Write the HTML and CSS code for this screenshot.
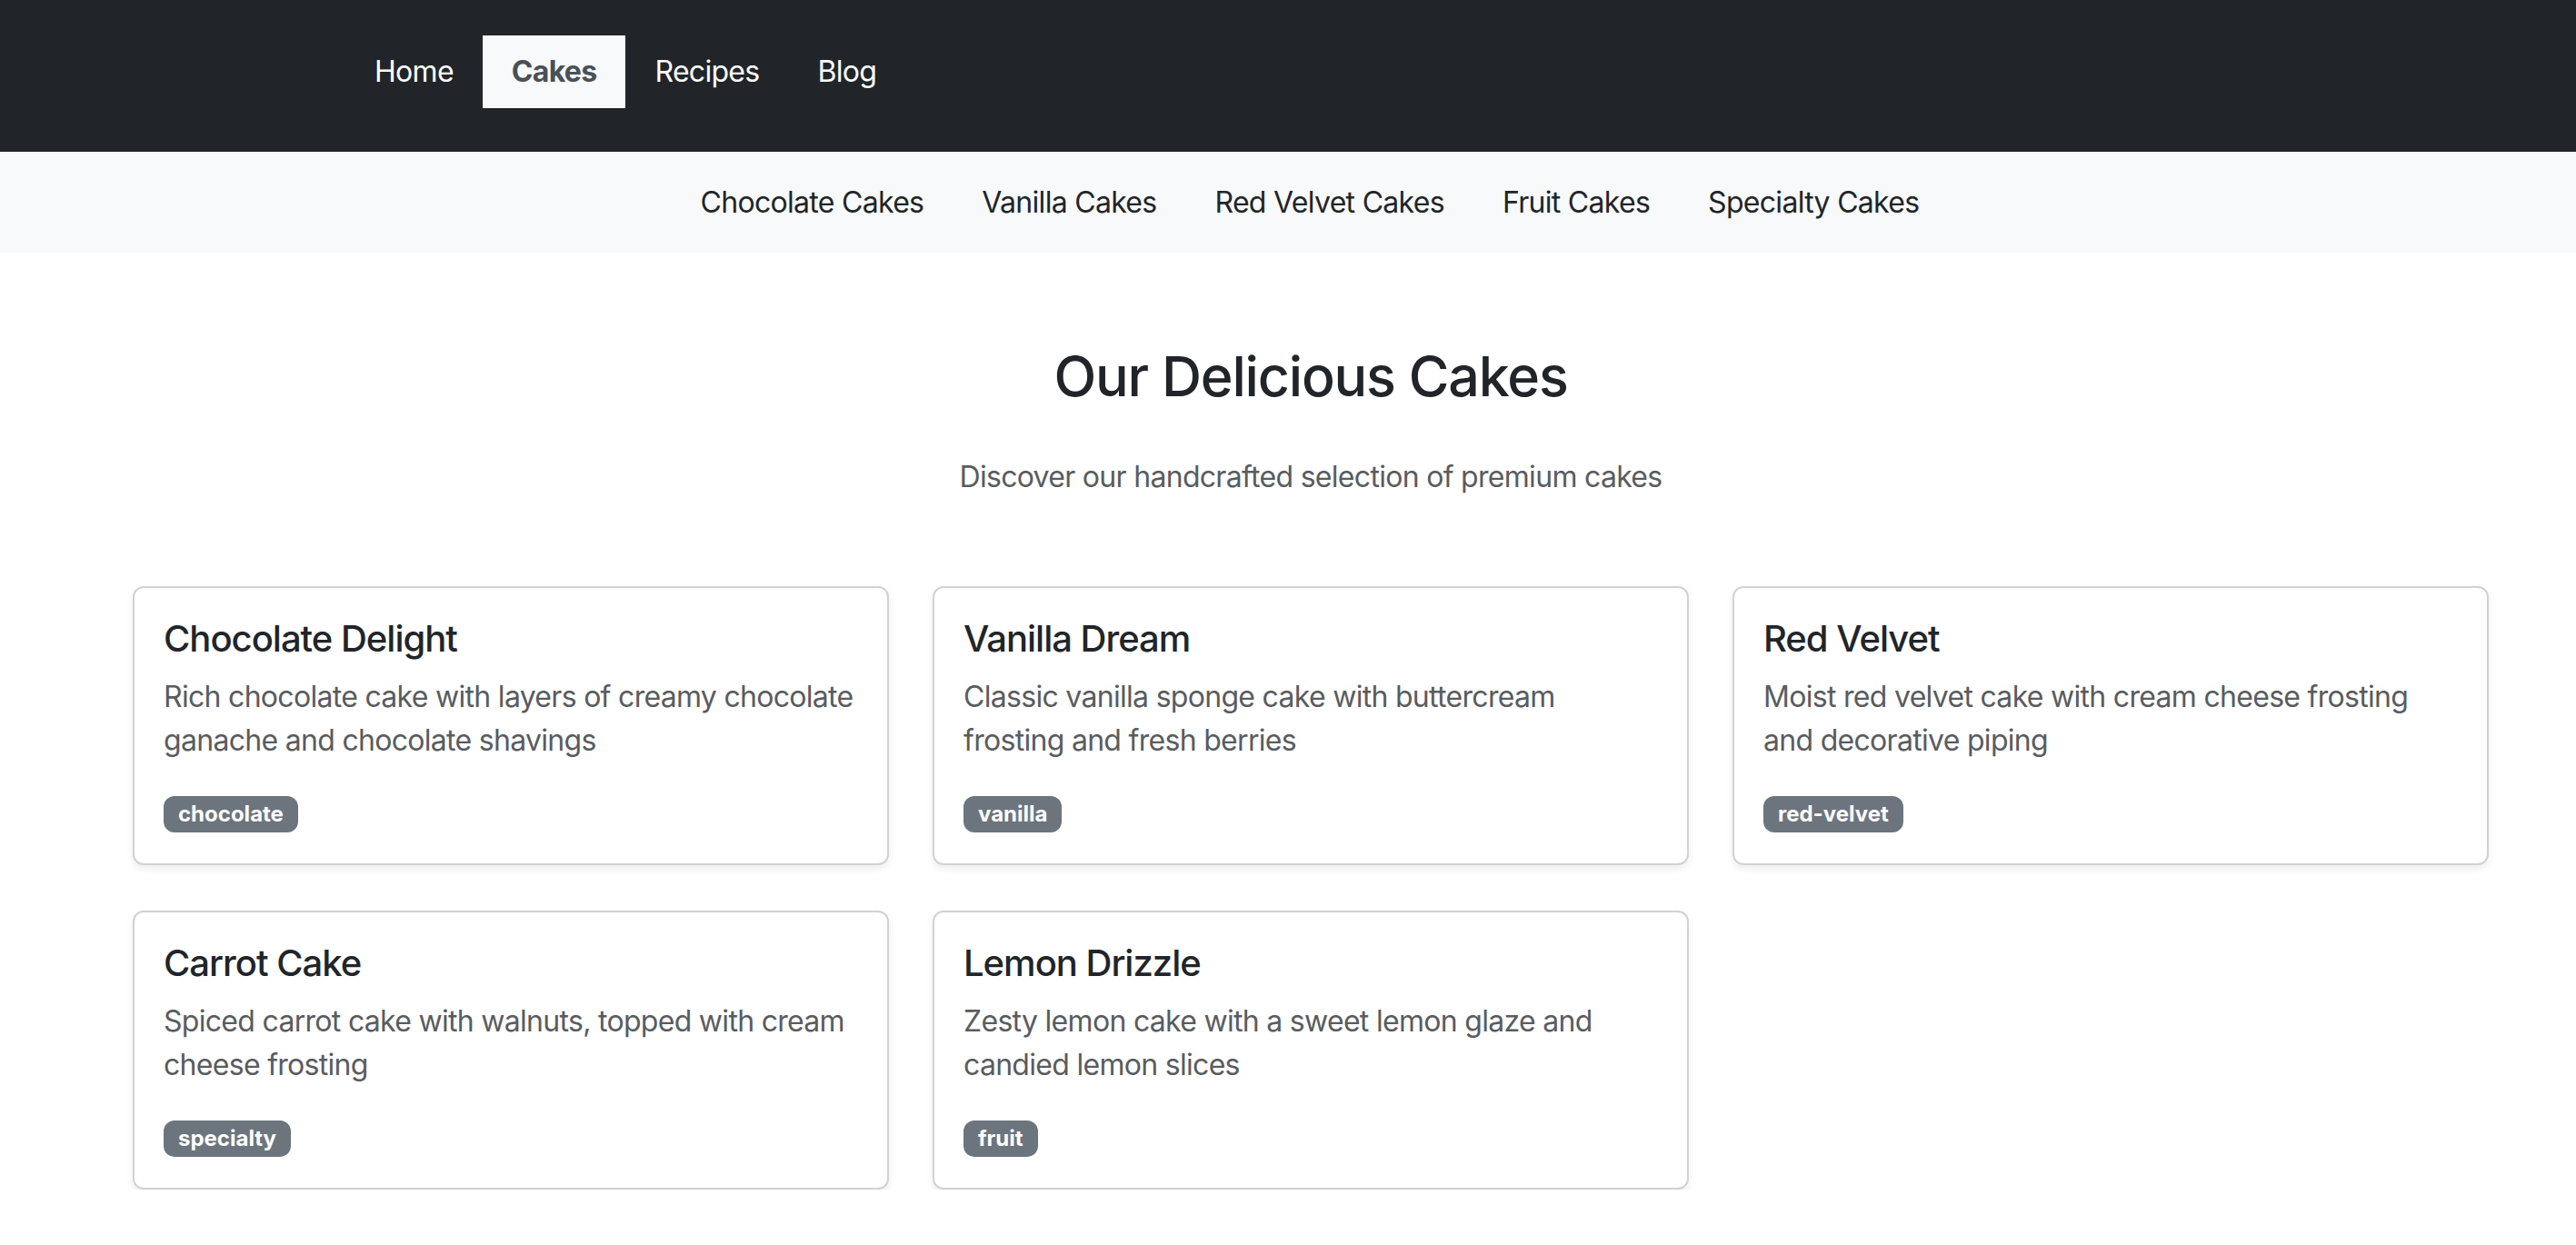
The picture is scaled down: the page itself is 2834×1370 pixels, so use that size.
FILE: index.html
```html
<!DOCTYPE html>
<html lang="en">
<head>
<meta charset="utf-8">
<title>Our Delicious Cakes</title>
<link rel="stylesheet" href="styles.css">
</head>
<body>
<header class="topbar">
  <nav class="topbar-inner">
    <a class="top-link" href="#">Home</a>
    <a class="top-link active" href="#">Cakes</a>
    <a class="top-link" href="#">Recipes</a>
    <a class="top-link" href="#">Blog</a>
  </nav>
</header>
<div class="subbar">
  <nav class="subbar-inner">
    <a class="sub-link" href="#">Chocolate Cakes</a>
    <a class="sub-link" href="#">Vanilla Cakes</a>
    <a class="sub-link" href="#">Red Velvet Cakes</a>
    <a class="sub-link" href="#">Fruit Cakes</a>
    <a class="sub-link" href="#">Specialty Cakes</a>
  </nav>
</div>
<main class="main">
  <h1 class="page-title">Our Delicious Cakes</h1>
  <p class="page-lead">Discover our handcrafted selection of premium cakes</p>
  <section class="grid">
    <article class="card">
      <h2 class="card-title">Chocolate Delight</h2>
      <p class="card-text">Rich chocolate cake with layers of creamy chocolate ganache and chocolate shavings</p>
      <div class="card-tags"><span class="badge">chocolate</span></div>
    </article>
    <article class="card">
      <h2 class="card-title">Vanilla Dream</h2>
      <p class="card-text">Classic vanilla sponge cake with buttercream frosting and fresh berries</p>
      <div class="card-tags"><span class="badge">vanilla</span></div>
    </article>
    <article class="card">
      <h2 class="card-title">Red Velvet</h2>
      <p class="card-text">Moist red velvet cake with cream cheese frosting and decorative piping</p>
      <div class="card-tags"><span class="badge">red-velvet</span></div>
    </article>
    <article class="card">
      <h2 class="card-title">Carrot Cake</h2>
      <p class="card-text">Spiced carrot cake with walnuts, topped with cream cheese frosting</p>
      <div class="card-tags"><span class="badge">specialty</span></div>
    </article>
    <article class="card">
      <h2 class="card-title">Lemon Drizzle</h2>
      <p class="card-text">Zesty lemon cake with a sweet lemon glaze and candied lemon slices</p>
      <div class="card-tags"><span class="badge">fruit</span></div>
    </article>
  </section>
</main>
</body>
</html>
```
FILE: styles.css
```css
* { box-sizing: border-box; }
html, body { margin: 0; padding: 0; }
body {
  font-family: Inter, "Noto Sans", "Liberation Sans", sans-serif;
  font-size: 32px;
  line-height: 1.5;
  letter-spacing: -0.7px;
  color: #212529;
  background: #fff;
  overflow: hidden;
}
a { text-decoration: none; }

.topbar {
  background: #212529;
  height: 167px;
}
.topbar-inner {
  display: flex;
  padding: 39px 0 0 380px;
}
.top-link {
  display: block;
  padding: 16px 32px;
  color: #fff;
  font-size: 32px;
  line-height: 48px;
}
.top-link.active {
  background: #f8f9fa;
  color: #495057;
  font-weight: 700;
}

.subbar {
  background: #f8f9fa;
  height: 111px;
  padding-left: 48px;
}
.subbar-inner {
  display: flex;
  justify-content: center;
  align-items: center;
  height: 100%;
}
.sub-link {
  display: block;
  padding: 0 32px;
  color: #212529;
  font-size: 32px;
  line-height: 48px;
}

.main {
  padding: 98px 96px 0 146px;
}
.page-title {
  margin: 0 0 48px;
  text-align: center;
  font-size: 61px;
  font-weight: 500;
  line-height: 1.26;
  letter-spacing: -1.2px;
}
.page-lead {
  margin: 0 0 96px;
  text-align: center;
  color: #595c5f;
}

.grid {
  display: grid;
  grid-template-columns: repeat(3, 1fr);
  gap: 50px 48px;
}
.card {
  border: 2px solid rgba(0, 0, 0, 0.175);
  border-radius: 12px;
  box-shadow: 0 4px 8px rgba(0, 0, 0, 0.075);
  padding: 32px;
  background: #fff;
}
.card-title {
  margin: 0 0 16px;
  font-size: 40px;
  font-weight: 500;
  line-height: 1.2;
  letter-spacing: -1px;
}
.card-text {
  margin: 0 0 32px;
  color: #595c5f;
}
.card-tags {
  padding: 5px 0 2px;
  line-height: 1;
}
.badge {
  display: inline-block;
  padding: 8px 16px;
  border-radius: 12px;
  background: #6c757d;
  color: #fff;
  font-size: 24px;
  font-weight: 700;
  line-height: 1;
  letter-spacing: 0;
}
```
